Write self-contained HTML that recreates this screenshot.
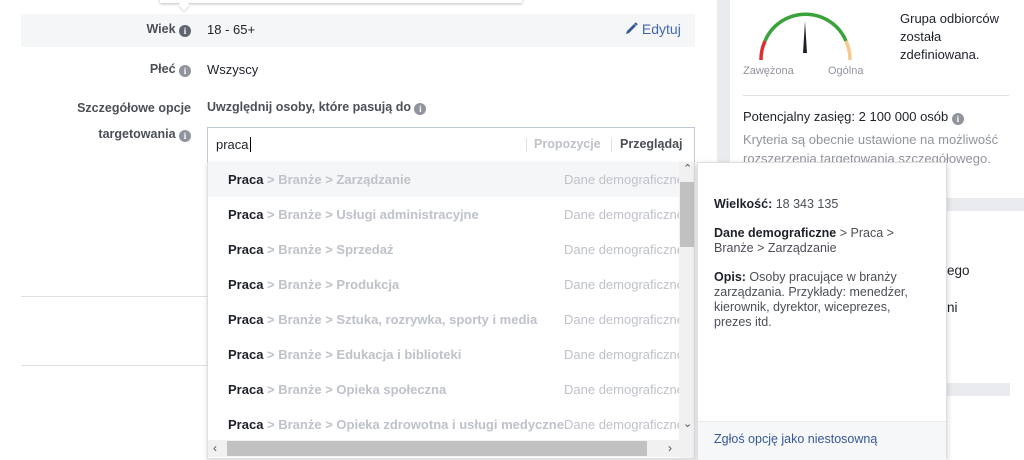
<!DOCTYPE html>
<html><head><meta charset="utf-8"><style>
*{margin:0;padding:0;box-sizing:border-box}
body{width:1024px;height:459px;overflow:hidden;background:#fff;font-family:"Liberation Sans",Arial,sans-serif;font-size:12px;color:#1d2129;position:relative}
.abs{position:absolute}
.info{display:inline-block;width:12px;height:12px;border-radius:50%;background:#606770;color:#fff;font-size:9px;font-weight:bold;text-align:center;line-height:12px;font-family:"Liberation Serif",serif;vertical-align:-1px}
.info.l{background:#90949c}
.lbl{font-weight:bold;color:#4b4f56;text-align:right;right:833px;white-space:nowrap;font-size:12.5px}
.row{position:absolute;left:0;width:471px;height:35px;line-height:35px;padding-left:20px;font-weight:bold;color:#bec2c9;white-space:nowrap;overflow:hidden;font-size:13px}
.row b{color:#1d2129}
.row .d{position:absolute;left:356px;top:0;font-weight:normal;color:#bec2c9;font-size:13px}
</style></head><body>
<div class="abs" style="left:160px;top:-10px;width:362px;height:13px;background:#fff;box-shadow:0 1px 3px rgba(0,0,0,.25)"></div>
<div class="abs" style="left:180px;top:1px;width:8px;height:8px;background:#fff;transform:rotate(45deg);box-shadow:1px 1px 2px rgba(0,0,0,.15)"></div>
<div class="abs" style="left:21px;top:14px;width:674px;height:33px;background:#f5f6f7"></div>
<div class="abs lbl" style="top:22px">Wiek <span class="info">i</span></div>
<div class="abs" style="left:207px;top:22px;color:#1d2129;font-size:13px">18 - 65+</div>
<div class="abs" style="left:625px;top:21px;color:#4267b2;font-size:14px"><svg width="13" height="13" viewBox="0 0 13 13" style="vertical-align:-1px"><path d="M1 12 L2 9 L9 2 L11 4 L4 11 Z" fill="#365899"/><path d="M10 1 L12 3" stroke="#365899" stroke-width="2"/></svg> Edytuj</div>
<div class="abs lbl" style="top:62px">Płeć <span class="info l">i</span></div>
<div class="abs" style="left:207px;top:62px;font-size:13px">Wszyscy</div>
<div class="abs lbl" style="top:101px">Szczegółowe opcje</div>
<div class="abs lbl" style="top:127px">targetowania <span class="info l">i</span></div>
<div class="abs" style="left:207px;top:100px;font-weight:bold;color:#4b4f56;font-size:12.5px">Uwzględnij osoby, które pasują do <span class="info l">i</span></div>
<div class="abs" style="left:21px;top:296px;width:186px;height:1px;background:#dddfe2"></div>
<div class="abs" style="left:21px;top:365px;width:186px;height:1px;background:#dddfe2"></div>
<div class="abs" style="left:207px;top:127px;width:488px;height:36px;border:1px solid #bdc7d8;background:#fff">
<div class="abs" style="left:8px;top:9px;font-size:13px">praca<span style="border-left:1px solid #000;margin-left:1px"></span></div>
<div class="abs" style="left:318px;top:10px;width:1px;height:14px;background:#dddfe2"></div>
<div class="abs" style="left:326px;top:9px;font-weight:bold;color:#bec2c9;font-size:12.5px">Propozycje</div>
<div class="abs" style="left:403px;top:10px;width:1px;height:14px;background:#dddfe2"></div>
<div class="abs" style="left:412px;top:9px;font-weight:bold;color:#4b4f56;font-size:12.5px">Przeglądaj</div>
</div>
<div class="abs" style="left:706px;top:0;width:24px;height:459px;background:#e9ebee"></div>
<div class="abs" style="left:706px;top:0;width:11px;height:459px;background:#fff"></div>
<svg class="abs" style="left:740px;top:0" width="130" height="80" viewBox="740 0 130 80">
<path d="M761 60 A44 44 0 0 1 765 41" stroke="#e02d2d" stroke-width="3.5" fill="none"/>
<path d="M765 41 A44 44 0 0 1 846 41" stroke="#3aa23a" stroke-width="3.5" fill="none"/>
<path d="M846 41 A44 44 0 0 1 850 60" stroke="#f7c98c" stroke-width="3.5" fill="none"/>
<path d="M803 53 L805 21 L807 53 Z" fill="#1d2129"/>
</svg>
<div class="abs" style="left:743px;top:65px;font-size:11px;color:#90949c">Zawężona</div>
<div class="abs" style="left:828px;top:65px;font-size:11px;color:#90949c">Ogólna</div>
<div class="abs" style="left:900px;top:10px;font-size:13px;line-height:18px;color:#1d2129">Grupa odbiorców<br>została<br>zdefiniowana.</div>
<div class="abs" style="left:743px;top:95px;width:266px;height:1px;background:#dddfe2"></div>
<div class="abs" style="left:743px;top:109px;font-size:13px">Potencjalny zasięg: 2 100 000 osób <span class="info l">i</span></div>
<div class="abs" style="left:743px;top:130px;font-size:13px;color:#90949c;line-height:19px;white-space:nowrap">Kryteria są obecnie ustawione na możliwość<br>rozszerzenia targetowania szczegółowego.</div>
<div class="abs" style="left:730px;top:198px;width:294px;height:13px;background:#e9ebee"></div>
<div class="abs" style="left:947px;top:263px;font-size:13.5px">ego</div>
<div class="abs" style="left:947px;top:300px;font-size:13.5px">ni</div>
<div class="abs" style="left:730px;top:383px;width:280px;height:13px;background:#e9ebee"></div>
<div class="abs" style="left:207px;top:162px;width:488px;height:297px;background:#fff;border:1px solid #dddfe2;border-top:none;overflow:hidden;box-shadow:0 2px 4px rgba(0,0,0,.15)">
<div class="row" style="top:0;background:#f5f6f7"><b>Praca</b> &gt; Branże &gt; Zarządzanie<span class="d">Dane demograficzne</span></div>
<div class="row" style="top:35px"><b>Praca</b> &gt; Branże &gt; Usługi administracyjne<span class="d">Dane demograficzne</span></div>
<div class="row" style="top:70px"><b>Praca</b> &gt; Branże &gt; Sprzedaż<span class="d">Dane demograficzne</span></div>
<div class="row" style="top:105px"><b>Praca</b> &gt; Branże &gt; Produkcja<span class="d">Dane demograficzne</span></div>
<div class="row" style="top:140px"><b>Praca</b> &gt; Branże &gt; Sztuka, rozrywka, sporty i media<span class="d">Dane demograficzne</span></div>
<div class="row" style="top:175px"><b>Praca</b> &gt; Branże &gt; Edukacja i biblioteki<span class="d">Dane demograficzne</span></div>
<div class="row" style="top:210px"><b>Praca</b> &gt; Branże &gt; Opieka społeczna<span class="d">Dane demograficzne</span></div>
<div class="row" style="top:245px"><b>Praca</b> &gt; Branże &gt; Opieka zdrowotna i usługi medyczne<span class="d" style="background:#fff">Dane demograficzne</span></div>
<div class="abs" style="left:471px;top:0;width:17px;height:297px;background:#f1f1f1"></div>
<div class="abs" style="left:472px;top:20px;width:15px;height:65px;background:#c1c1c1"></div>
<div class="abs" style="left:475px;top:0;font-size:11px;color:#505050">&#8963;</div>
<div class="abs" style="left:475px;top:255px;font-size:11px;color:#505050">&#8964;</div>
<div class="abs" style="left:0;top:278px;width:471px;height:17px;background:#f1f1f1"></div>
<div class="abs" style="left:19px;top:279px;width:420px;height:15px;background:#c1c1c1"></div>
<div class="abs" style="left:5px;top:279px;font-size:12px;color:#505050">&lsaquo;</div>
<div class="abs" style="left:460px;top:279px;font-size:12px;color:#505050">&rsaquo;</div>
</div>
<div class="abs" style="left:697px;top:162px;width:250px;height:297px;background:#fff;border:1px solid #dddfe2;box-shadow:0 2px 6px rgba(0,0,0,.2)">
<div class="abs" style="left:16px;top:34px;font-size:12.5px;color:#4b4f56;width:228px;line-height:15px">
<div><b style="color:#1d2129">Wielkość:</b> 18 343 135</div>
<div style="margin-top:14px"><b style="color:#1d2129">Dane demograficzne</b> &gt; Praca &gt;<br>Branże &gt; Zarządzanie</div>
<div style="margin-top:14px"><b style="color:#1d2129">Opis:</b> Osoby pracujące w branży<br>zarządzania. Przykłady: menedżer,<br>kierownik, dyrektor, wiceprezes,<br>prezes itd.</div>
</div>
<div class="abs" style="left:0;top:258px;width:248px;height:39px;background:#f6f7f9;border-top:1px solid #e9ebee;padding:10px 16px;color:#365899;font-size:12.5px">Zgłoś opcję jako niestosowną</div>
</div>
</body></html>
